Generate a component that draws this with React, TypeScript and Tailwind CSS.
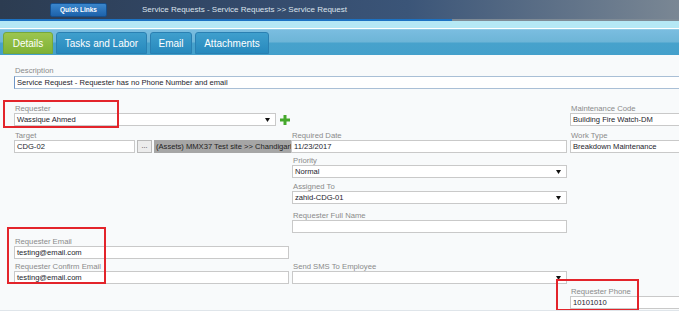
const font = "font-['Liberation_Sans',Arial,sans-serif]"

function Label({ children }: { children: React.ReactNode }) {
  return <div className="h-[9px] pl-[1px] text-[7.7px] leading-[9px] text-[#8a8a8a] whitespace-nowrap">{children}</div>
}

function Input({ value = '', className = '' }: { value?: string; className?: string }) {
  return (
    <div className={`h-[13px] border border-[#c9c9c9] bg-white pl-[2px] text-[7.6px] leading-[11px] text-[#1c1c2c] whitespace-nowrap overflow-hidden ${className}`}>
      {value}
    </div>
  )
}

function Arrow() {
  return (
    <svg width="5" height="4" viewBox="0 0 5 4" className="shrink-0">
      <path d="M0 0 H5 L2.5 4 Z" fill="#111" />
    </svg>
  )
}

function Select({ value = '', className = '' }: { value?: string; className?: string }) {
  return (
    <div className={`h-[13px] border border-[#c9c9c9] bg-white pl-[2px] pr-[5px] flex items-center justify-between text-[7.6px] text-[#1c1c2c] whitespace-nowrap ${className}`}>
      <span>{value}</span>
      <Arrow />
    </div>
  )
}

function RedBox({ className }: { className: string }) {
  return <div className={`absolute border-2 border-[#e3242b] pointer-events-none z-10 ${className}`} />
}

const tabs = [
  { label: 'Details', w: 'w-[50px]', active: true },
  { label: 'Tasks and Labor', w: 'w-[91px]', active: false },
  { label: 'Email', w: 'w-[42px]', active: false },
  { label: 'Attachments', w: 'w-[74px]', active: false },
]

export default function App() {
  return (
    <div className={`w-[679px] h-[318px] overflow-hidden bg-white ${font}`}>
      {/* top bar */}
      <div className="h-[19px] flex items-center bg-[linear-gradient(90deg,#2c3c51_0%,#33496a_35%,#3b5578_60%,#7a8794_100%)]">
        <div className="ml-[50px] w-[57px] h-[14px] rounded-[2px] bg-[linear-gradient(180deg,#3a86cc_0%,#1d62aa_100%)] border border-[#164f8c] flex items-center justify-center text-white font-bold text-[6.5px]">
          Quick Links
        </div>
        <span className="ml-[35px] text-[8px] text-[#dce3ec]">Service Requests - Service Requests &gt;&gt; Service Request</span>
      </div>
      <div className="h-[2px] flex">
        <div className="w-[452px] bg-[#1d72c2]" />
        <div className="flex-1 bg-[#7f8b96]" />
      </div>
      <div className="h-[7px] bg-[#b5e8f5]" />
      <div className="h-[1px] bg-white" />

      {/* tabs */}
      <div className="h-[26px] border-t border-[#8fcbe6] bg-[linear-gradient(180deg,#7abde0_0%,#6db5d7_48%,#47a2cc_52%,#44a0cb_100%)] flex items-end gap-[3px] pl-[3px] pb-[1px]">
        {tabs.map(t => (
          <div
            key={t.label}
            className={`${t.w} h-[22px] rounded-t-[3px] flex items-center justify-center text-white text-[10px] border ${
              t.active
                ? 'bg-[linear-gradient(180deg,#9cc54f_0%,#7fb236_100%)] border-[#76a83a]'
                : 'bg-[linear-gradient(180deg,#3f9fcd_0%,#2789bd_100%)] border-[#2a80b2]'
            }`}
          >
            {t.label}
          </div>
        ))}
      </div>

      {/* content */}
      <div className="h-[256px] bg-[#f8fafb] pl-[14px] pt-[11px] border-b border-[#dfe5ea] overflow-hidden">
        <div className="h-[10px] pl-[1px] text-[7.7px] leading-[9px] text-[#8a8a8a]">Description</div>
        <div className="h-[13px] -mr-[20px] border border-[#a9bfd6] border-l-[#6f95c6] bg-white pl-[2px] text-[7.6px] leading-[11px] text-[#1c1c2c] whitespace-nowrap">
          Service Request - Requester has no Phone Number and email
        </div>

        <div className="mt-[15px] flex">
          {/* left column */}
          <div className="w-[277px] shrink-0 flex flex-col">
            <div className="relative">
              <RedBox className="-left-[11px] -top-[4px] w-[116px] h-[28px]" />
              <Label>Requester</Label>
              <div className="flex items-center">
                <Select value="Wassique Ahmed" className="w-[262px]" />
                <svg width="10" height="10" viewBox="0 0 10 10" className="ml-[4px]">
                  <path d="M3.5 0 H6.5 V3.5 H10 V6.5 H6.5 V10 H3.5 V6.5 H0 V3.5 H3.5 Z" fill="#45a82c" />
                </svg>
              </div>
            </div>
            <div className="mt-[5px]">
              <Label>Target</Label>
              <div className="flex h-[13px]">
                <Input value="CDG-02" className="w-[121px]" />
                <div className="ml-[2px] w-[15px] h-[13px] border border-[#b9b9b9] bg-[#ececec] text-[7px] leading-[9px] text-center text-[#333]">...</div>
                <div className="ml-[2px] flex-1 h-[13px] bg-[#a6a6a6] pl-[2px] text-[7.6px] leading-[13px] text-[#222] whitespace-nowrap overflow-hidden">
                  (Assets) MMX37 Test site &gt;&gt; Chandigarh
                </div>
              </div>
            </div>
            <div className="mt-[84px] relative">
              <RedBox className="-left-[7px] -top-[10px] w-[99px] h-[57px]" />
              <Label>Requester Email</Label>
              <Input value="testing@email.com" className="w-[275px]" />
              <div className="mt-[3px]">
                <Label>Requester Confirm Email</Label>
                <Input value="testing@email.com" className="w-[275px]" />
              </div>
            </div>
          </div>

          {/* middle column */}
          <div className="w-[276px] shrink-0 mt-[27px] flex flex-col">
            <div>
              <Label>Required Date</Label>
              <Input value="11/23/2017" />
            </div>
            <div className="mt-[3px] pl-[1px]">
              <Label>Priority</Label>
              <Select value="Normal" />
            </div>
            <div className="mt-[4px] pl-[1px]">
              <Label>Assigned To</Label>
              <Select value="zahid-CDG-01" />
            </div>
            <div className="mt-[7px] pl-[1px]">
              <Label>Requester Full Name</Label>
              <Input />
            </div>
            <div className="mt-[29px] pl-[1px]">
              <Label>Send SMS To Employee</Label>
              <Select />
            </div>
          </div>

          {/* right column */}
          <div className="ml-[3px] w-[140px] shrink-0 flex flex-col">
            <div>
              <Label>Maintenance Code</Label>
              <Input value="Building Fire Watch-DM" />
            </div>
            <div className="mt-[5px]">
              <Label>Work Type</Label>
              <Input value="Breakdown Maintenance" />
            </div>
            <div className="mt-[134px] relative">
              <RedBox className="-left-[14px] -top-[8px] w-[83px] h-[32px]" />
              <Label>Requester Phone</Label>
              <Input value="10101010" />
            </div>
          </div>
        </div>
      </div>
    </div>
  )
}
